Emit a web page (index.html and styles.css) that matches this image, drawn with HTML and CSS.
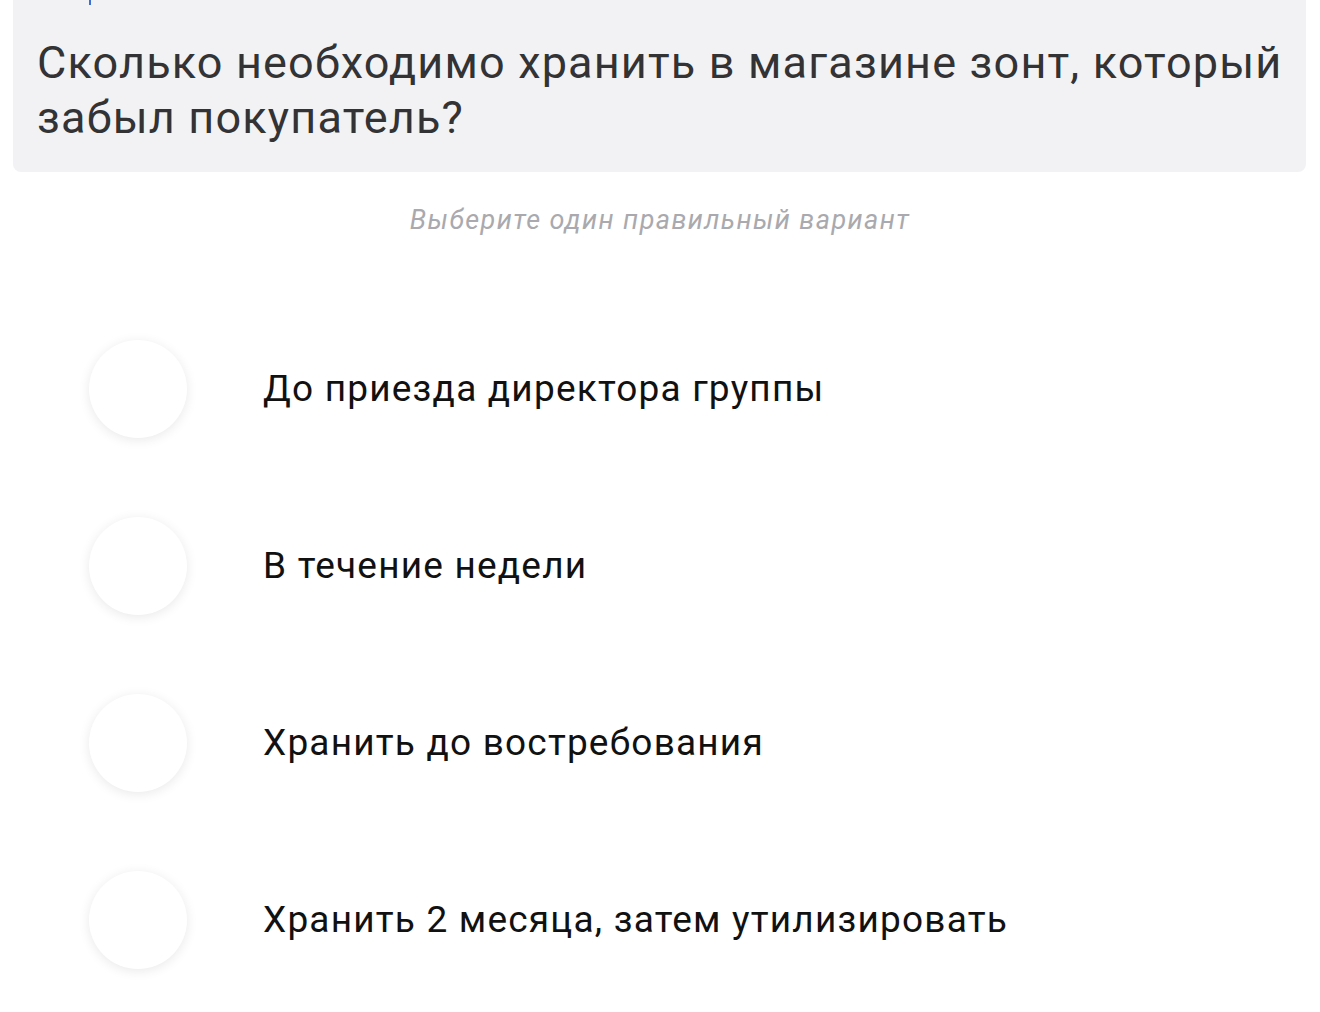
FILE: index.html
```html
<!DOCTYPE html>
<html lang="ru">
<head>
<meta charset="utf-8">
<link rel="stylesheet" href="styles.css">
</head>
<body>
<div class="page">
  <div class="question">
    <span class="mark"></span>
    <p class="question-text">Сколько необходимо хранить в магазине зонт, который забыл покупатель?</p>
  </div>
  <p class="hint">Выберите один правильный вариант</p>
  <ul class="options">
    <li class="option"><span class="radio"></span><span class="label">До приезда директора группы</span></li>
    <li class="option"><span class="radio"></span><span class="label">В течение недели</span></li>
    <li class="option"><span class="radio"></span><span class="label">Хранить до востребования</span></li>
    <li class="option"><span class="radio"></span><span class="label">Хранить 2 месяца, затем утилизировать</span></li>
  </ul>
</div>
</body>
</html>
```

FILE: styles.css
```css
html, body {
  margin: 0;
  padding: 0;
  background: #ffffff;
}
.page {
  width: 1320px;
  height: 1012px;
  overflow: hidden;
}
.question {
  position: relative;
  margin: -10px 14px 0 13px;
  padding: 45px 0 27px 24px;
  background: #f2f2f4;
  border-radius: 0 0 8px 8px;
}
.mark {
  position: absolute;
  left: 76px;
  top: 6px;
  width: 2px;
  height: 9px;
  background: #3b6fd8;
}
.question-text {
  margin: 0;
  font-family: Roboto, "Noto Sans", sans-serif;
  font-size: 45px;
  line-height: 55px;
  letter-spacing: 1.17px;
  color: #333335;
}
.hint {
  margin: 32px 0 0;
  text-align: center;
  font-family: Roboto, "Noto Sans", sans-serif;
  font-style: italic;
  font-size: 27px;
  line-height: 32px;
  letter-spacing: 1.4px;
  color: #a9a9ae;
}
.options {
  list-style: none;
  margin: 104px 0 0;
  padding: 0 0 0 89px;
  display: flex;
  flex-direction: column;
  gap: 79px;
}
.option {
  display: flex;
  align-items: center;
  gap: 76px;
}
.radio {
  width: 98px;
  height: 98px;
  flex: 0 0 98px;
  border-radius: 50%;
  background: #ffffff;
  box-shadow: 0 2px 12px rgba(0, 0, 0, 0.09);
}
.label {
  font-family: Roboto, "Noto Sans", sans-serif;
  font-size: 37px;
  line-height: 44px;
  letter-spacing: 1.2px;
  color: #111111;
}
```
